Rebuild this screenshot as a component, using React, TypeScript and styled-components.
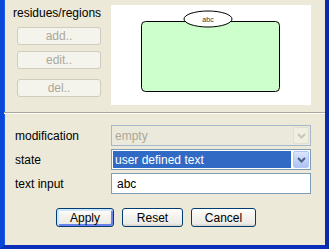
import styled, { createGlobalStyle, css } from "styled-components"

const Global = createGlobalStyle`
  html, body {
    margin: 0;
    padding: 0;
    background: #ffffff;
  }
  body {
    font-family: "Liberation Sans", Arial, sans-serif;
    font-size: 12px;
    color: #000;
  }
`

const Window = styled.div`
  box-sizing: border-box;
  width: 329px;
  height: 249px;
  background: #ece9d8;
  border-left: 4px solid #0a46d8;
  border-right: 4px solid #0a2aa6;
  border-bottom: 4px solid #0a2fb8;
  box-shadow: inset 1px 0 0 #1c5ae8;
  display: flex;
  flex-direction: column;
`

const TopSection = styled.div`
  display: flex;
  padding: 5px 0 0 9px;
`

const SideColumn = styled.div`
  width: 98px;
  display: flex;
  flex-direction: column;
`

const SectionLabel = styled.div`
  height: 14px;
  line-height: 14px;
  margin-top: 1px;
`

const SideButton = styled.div<{ $gap: number }>`
  box-sizing: border-box;
  width: 84px;
  height: 18px;
  margin: ${p => p.$gap}px 0 0 4px;
  border: 1px solid #cfccbd;
  border-radius: 3px;
  background: #f5f4ec;
  color: #aca899;
  display: flex;
  align-items: center;
  justify-content: center;
`

const Canvas = styled.div`
  width: 200px;
  height: 100px;
  background: #ffffff;
  svg {
    display: block;
  }
`

const Separator = styled.div`
  margin-top: 7px;
  height: 1px;
  background: #aca899;
  border-bottom: 1px solid #ffffff;
`

const Form = styled.div`
  display: grid;
  grid-template-columns: 96px 200px;
  grid-auto-rows: 21px;
  row-gap: 3px;
  padding: 11px 0 0 11px;
`

const FieldLabel = styled.div`
  display: flex;
  align-items: center;
`

const Field = styled.div<{ $disabled?: boolean }>`
  box-sizing: border-box;
  height: 21px;
  border: 1px solid ${p => (p.$disabled ? "#a6b7cc" : "#7f9db9")};
  background: ${p => (p.$disabled ? "#ebe9db" : "#ffffff")};
  display: flex;
  align-items: stretch;
  padding: 1px;
`

const FieldText = styled.div<{ $selected?: boolean; $disabled?: boolean }>`
  flex: 1;
  display: flex;
  align-items: center;
  padding-left: 2px;
  margin-right: 2px;
  color: ${p => (p.$disabled ? "#aca899" : "#000")};
  ${p =>
    p.$selected &&
    css`
      background: #316ac5;
      color: #ffffff;
    `}
`

const InputText = styled.div`
  flex: 1;
  display: flex;
  align-items: center;
  padding-left: 4px;
`

const DropButton = styled.div<{ $disabled?: boolean }>`
  width: 16px;
  border-radius: 2px;
  display: flex;
  align-items: center;
  justify-content: center;
  ${p =>
    p.$disabled
      ? css`
          background: #f1efe2;
          border: 1px solid #e2dfd0;
        `
      : css`
          background: linear-gradient(180deg, #dbe6fd 0%, #bfd1f9 60%, #afc3f4 100%);
          border: 1px solid #b3c6f3;
        `}
  box-sizing: border-box;
`

const Actions = styled.div`
  display: flex;
  gap: 8px;
  padding: 14px 0 0 52px;
`

const Button = styled.div<{ $width: number; $default?: boolean }>`
  box-sizing: border-box;
  width: ${p => p.$width}px;
  height: 19px;
  border: 1px solid #003c74;
  border-radius: 3px;
  background: linear-gradient(180deg, #ffffff 0%, #f4f3ee 40%, #ecebe6 85%, #d6d0c5 100%);
  display: flex;
  align-items: center;
  justify-content: center;
  ${p =>
    p.$default &&
    css`
      box-shadow: inset 1px 1px 0 1px #cee7ff, inset -1px -1px 0 1px #6982ee;
    `}
`

function Chevron({ disabled }: { disabled?: boolean }) {
  return (
    <svg width="9" height="6" viewBox="0 0 9 6">
      <path
        d="M1 1 L4.5 4.5 L8 1"
        fill="none"
        stroke={disabled ? "#c9c7ba" : "#4d6185"}
        strokeWidth="2"
      />
    </svg>
  )
}

export default function App() {
  return (
    <>
      <Global />
      <Window>
        <TopSection>
          <SideColumn>
            <SectionLabel>residues/regions</SectionLabel>
            <SideButton $gap={7}>add..</SideButton>
            <SideButton $gap={6}>edit..</SideButton>
            <SideButton $gap={10}>del..</SideButton>
          </SideColumn>
          <Canvas>
            <svg width="200" height="100" viewBox="0 0 200 100">
              <rect x="30.5" y="16.5" width="138" height="70" rx="4" fill="#ccffcc" stroke="#000" />
              <ellipse cx="97" cy="14" rx="24" ry="8" fill="#ffffff" stroke="#000" />
              <text
                x="97"
                y="16.5"
                textAnchor="middle"
                fontSize="7"
                fill="#333"
                fontFamily="Liberation Sans, Arial, sans-serif"
              >
                abc
              </text>
            </svg>
          </Canvas>
        </TopSection>
        <Separator />
        <Form>
          <FieldLabel>modification</FieldLabel>
          <Field $disabled>
            <FieldText $disabled>empty</FieldText>
            <DropButton $disabled>
              <Chevron disabled />
            </DropButton>
          </Field>
          <FieldLabel>state</FieldLabel>
          <Field>
            <FieldText $selected>user defined text</FieldText>
            <DropButton>
              <Chevron />
            </DropButton>
          </Field>
          <FieldLabel>text input</FieldLabel>
          <Field>
            <InputText>abc</InputText>
          </Field>
        </Form>
        <Actions>
          <Button $width={58} $default>Apply</Button>
          <Button $width={61}>Reset</Button>
          <Button $width={65}>Cancel</Button>
        </Actions>
      </Window>
    </>
  )
}
